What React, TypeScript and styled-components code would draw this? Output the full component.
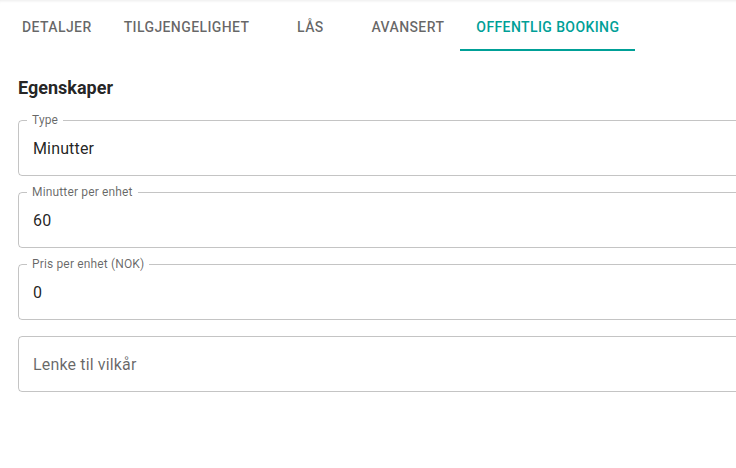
import React from 'react'
import styled, { createGlobalStyle } from 'styled-components'

const GlobalStyle = createGlobalStyle`
  html, body {
    margin: 0;
    padding: 0;
    background: #ffffff;
    overflow: hidden;
  }
  body {
    font-family: Roboto, "Liberation Sans", Arial, sans-serif;
    color: rgba(0, 0, 0, 0.87);
  }
`

const Page = styled.div`
  width: 736px;
  height: 468px;
  padding-top: 3px;
  box-sizing: border-box;
  box-shadow: inset 0 3px 3px -2px rgba(0, 0, 0, 0.08);
  overflow: hidden;
`

const TabBar = styled.div`
  display: flex;
  height: 48px;
  margin-left: 6px;
`

const Tab = styled.button<{ $active?: boolean }>`
  position: relative;
  display: flex;
  align-items: center;
  justify-content: center;
  min-width: 90px;
  padding: 12px 16px;
  border: none;
  background: transparent;
  font-family: Roboto, "Liberation Sans", Arial, sans-serif;
  font-size: 14px;
  font-weight: 500;
  letter-spacing: 0.4px;
  text-transform: uppercase;
  white-space: nowrap;
  color: ${({ $active }) => ($active ? '#00a097' : 'rgba(0, 0, 0, 0.6)')};
  cursor: pointer;

  &::after {
    content: '';
    display: ${({ $active }) => ($active ? 'block' : 'none')};
    position: absolute;
    left: 0;
    right: 0;
    bottom: 0;
    height: 2px;
    background: #00a097;
  }
`

const Section = styled.div`
  width: 760px;
  padding: 26px 0 0 18px;
`

const Heading = styled.h6`
  margin: 0 0 16px;
  font-size: 18px;
  line-height: 21px;
  font-weight: 700;
  color: rgba(0, 0, 0, 0.87);
`

const Fields = styled.div`
  display: flex;
  flex-direction: column;
  gap: 10px;
`

const Outline = styled.fieldset`
  margin: 0;
  padding: 0 14px 15px;
  min-width: 0;
  border: 1px solid rgba(0, 0, 0, 0.23);
  border-radius: 4px;
`

const Legend = styled.legend<{ $empty?: boolean }>`
  margin-left: -6px;
  padding: ${({ $empty }) => ($empty ? '0' : '0 5px')};
  height: 12px;
  font-size: 12px;
  line-height: 12px;
  letter-spacing: 0.15px;
  color: rgba(0, 0, 0, 0.6);
`

const Value = styled.div<{ $placeholder?: boolean }>`
  margin-top: 11px;
  height: 23px;
  font-size: 16px;
  line-height: 23px;
  letter-spacing: 0.15px;
  color: ${({ $placeholder }) => ($placeholder ? 'rgba(0, 0, 0, 0.6)' : 'rgba(0, 0, 0, 0.87)')};
`

const tabs = ['Detaljer', 'Tilgjengelighet', 'Lås', 'Avansert', 'Offentlig booking']

const fields = [
  { label: 'Type', value: 'Minutter' },
  { label: 'Minutter per enhet', value: '60' },
  { label: 'Pris per enhet (NOK)', value: '0' },
  { label: '', value: 'Lenke til vilkår' },
]

export default function App() {
  return (
    <Page>
      <GlobalStyle />
      <TabBar>
        {tabs.map((t, i) => (
          <Tab key={t} $active={i === tabs.length - 1}>
            {t}
          </Tab>
        ))}
      </TabBar>
      <Section>
        <Heading>Egenskaper</Heading>
        <Fields>
          {fields.map((f) => (
            <Outline key={f.value}>
              <Legend $empty={!f.label}>{f.label}</Legend>
              <Value $placeholder={!f.label}>{f.value}</Value>
            </Outline>
          ))}
        </Fields>
      </Section>
    </Page>
  )
}
